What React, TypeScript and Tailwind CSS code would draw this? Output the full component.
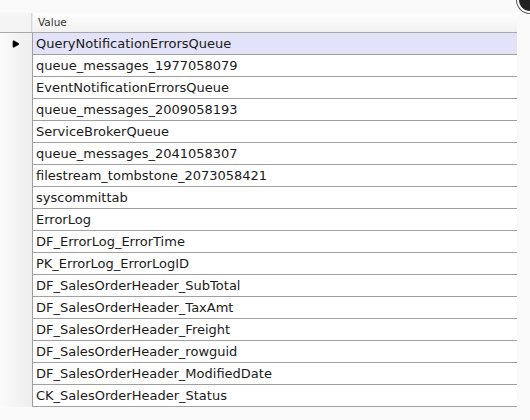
import { Play } from "lucide-react"

const rows = [
  "QueryNotificationErrorsQueue",
  "queue_messages_1977058079",
  "EventNotificationErrorsQueue",
  "queue_messages_2009058193",
  "ServiceBrokerQueue",
  "queue_messages_2041058307",
  "filestream_tombstone_2073058421",
  "syscommittab",
  "ErrorLog",
  "DF_ErrorLog_ErrorTime",
  "PK_ErrorLog_ErrorLogID",
  "DF_SalesOrderHeader_SubTotal",
  "DF_SalesOrderHeader_TaxAmt",
  "DF_SalesOrderHeader_Freight",
  "DF_SalesOrderHeader_rowguid",
  "DF_SalesOrderHeader_ModifiedDate",
  "CK_SalesOrderHeader_Status",
]

export default function App() {
  return (
    <div
      className="relative w-[530px] h-[420px] overflow-hidden bg-[#fafafa] pt-[13px]"
      style={{ fontFamily: '"DejaVu Sans", Verdana, sans-serif' }}
    >
      {/* corner button, mostly off screen */}
      <div className="absolute -right-[13px] -top-[13px] w-[26px] h-[26px] rounded-full bg-[#222] border-2 border-white shadow-[0_0_0_1px_#555]" />

      <div className="flex flex-col w-[517px]">
        {/* Header */}
        <div className="flex h-[20px] border-b border-[#a8a8a8] bg-gradient-to-b from-white to-[#f1f1f1]">
          <div className="w-[32px] border-r border-[#d8d8d8] bg-[#f4f4f4]" />
          <div className="flex-1 flex items-center pl-[5px] text-[10.5px] text-[#333] border-l border-[#ebebeb]">
            Value
          </div>
        </div>

        {rows.map((r, i) => (
          <div key={r} className="flex h-[22px]">
            <div className="w-[33px] flex items-center justify-center bg-gradient-to-r from-[#fafafa] to-[#eeeeee] border-r border-[#a0a0a0]">
              {i === 0 && <Play className="w-[9px] h-[10px] fill-black text-black -ml-[1px]" strokeWidth={1} />}
            </div>
            <div
              className={`flex-1 flex items-center pl-[3px] text-[13px] text-[#1a1a1a] border-b border-[#a0a0a0] ${
                i === 0 ? "bg-[#e2e2f8]" : "bg-white"
              }`}
            >
              {r}
            </div>
          </div>
        ))}
      </div>
    </div>
  )
}
